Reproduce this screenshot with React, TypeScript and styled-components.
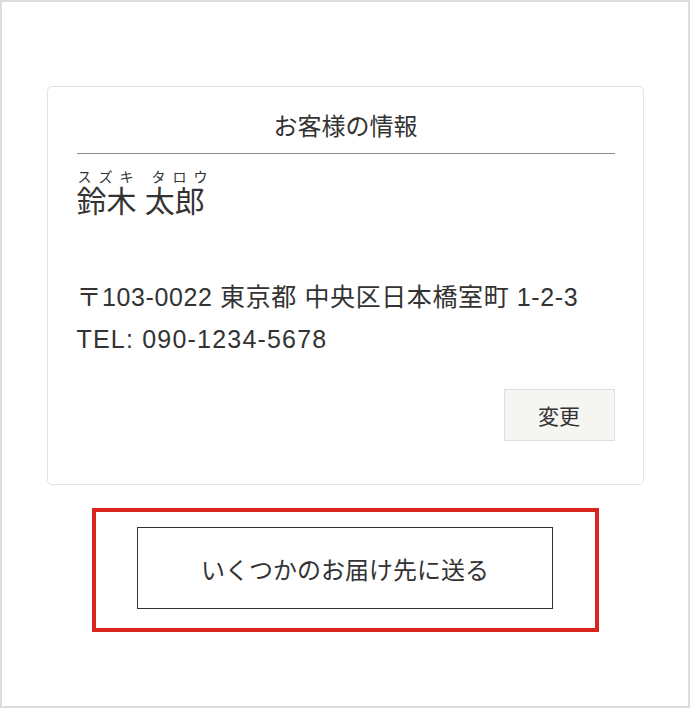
import styled, { createGlobalStyle } from "styled-components";

const GlobalStyle = createGlobalStyle`
  html, body {
    margin: 0;
    padding: 0;
    background: #ffffff;
  }
  body {
    font-family: "Liberation Sans", "Noto Sans CJK JP", sans-serif;
    color: #333333;
  }
`;

const Frame = styled.div`
  box-sizing: border-box;
  width: 690px;
  height: 708px;
  border: 2px solid #dcdcdc;
  padding: 84px 44px 0 44px;
  display: flex;
  flex-direction: column;
  align-items: center;
`;

const Card = styled.section`
  box-sizing: border-box;
  width: 597px;
  height: 399px;
  border: 1px solid #e3e3e3;
  border-radius: 5px;
  padding: 0 28px 0 29px;
  display: flex;
  flex-direction: column;
`;

const Title = styled.h2`
  margin: 0;
  padding-top: 26px;
  padding-bottom: 12px;
  border-bottom: 1px solid #8c8c8c;
  font-size: 24px;
  font-weight: normal;
  line-height: 28px;
  text-align: center;
  color: #333;
`;

const Kana = styled.div`
  margin-top: 15px;
  padding-left: 1px;
  font-size: 14px;
  line-height: 16px;
  letter-spacing: 7px;
  white-space: pre;
  color: #333;
`;

const Name = styled.div`
  margin-top: 2px;
  font-size: 30px;
  line-height: 30px;
  color: #333;
`;

const Address = styled.div`
  margin-top: 59px;
  display: flex;
  flex-direction: column;
`;

const Line = styled.div<{ $spacing: number }>`
  font-size: 25px;
  line-height: 42px;
  letter-spacing: ${(p) => p.$spacing}px;
  color: #333;
`;

const Actions = styled.div`
  margin-top: 29px;
  display: flex;
  justify-content: flex-end;
`;

const SmallButton = styled.button`
  box-sizing: border-box;
  width: 111px;
  height: 52px;
  background: #f5f5f2;
  border: 1px solid #dedede;
  font-family: inherit;
  font-size: 21px;
  color: #333;
  cursor: pointer;
`;

const Highlight = styled.div`
  box-sizing: border-box;
  margin-top: 23px;
  width: 507px;
  height: 124px;
  border: 4px solid #d9261c;
  padding-top: 15px;
  display: flex;
  justify-content: center;
  align-items: flex-start;
`;

const WideButton = styled.button`
  box-sizing: border-box;
  width: 416px;
  height: 82px;
  background: #ffffff;
  border: 1px solid #333333;
  font-family: inherit;
  font-size: 24px;
  color: #333;
  cursor: pointer;
`;

export default function App() {
  return (
    <>
      <GlobalStyle />
      <Frame>
        <Card>
          <Title>お客様の情報</Title>
          <Kana>スズキ タロウ</Kana>
          <Name>鈴木 太郎</Name>
          <Address>
            <Line $spacing={0.6}>〒103-0022 東京都 中央区日本橋室町 1-2-3</Line>
            <Line $spacing={1.2}>TEL: 090-1234-5678</Line>
          </Address>
          <Actions>
            <SmallButton>変更</SmallButton>
          </Actions>
        </Card>
        <Highlight>
          <WideButton>いくつかのお届け先に送る</WideButton>
        </Highlight>
      </Frame>
    </>
  );
}
